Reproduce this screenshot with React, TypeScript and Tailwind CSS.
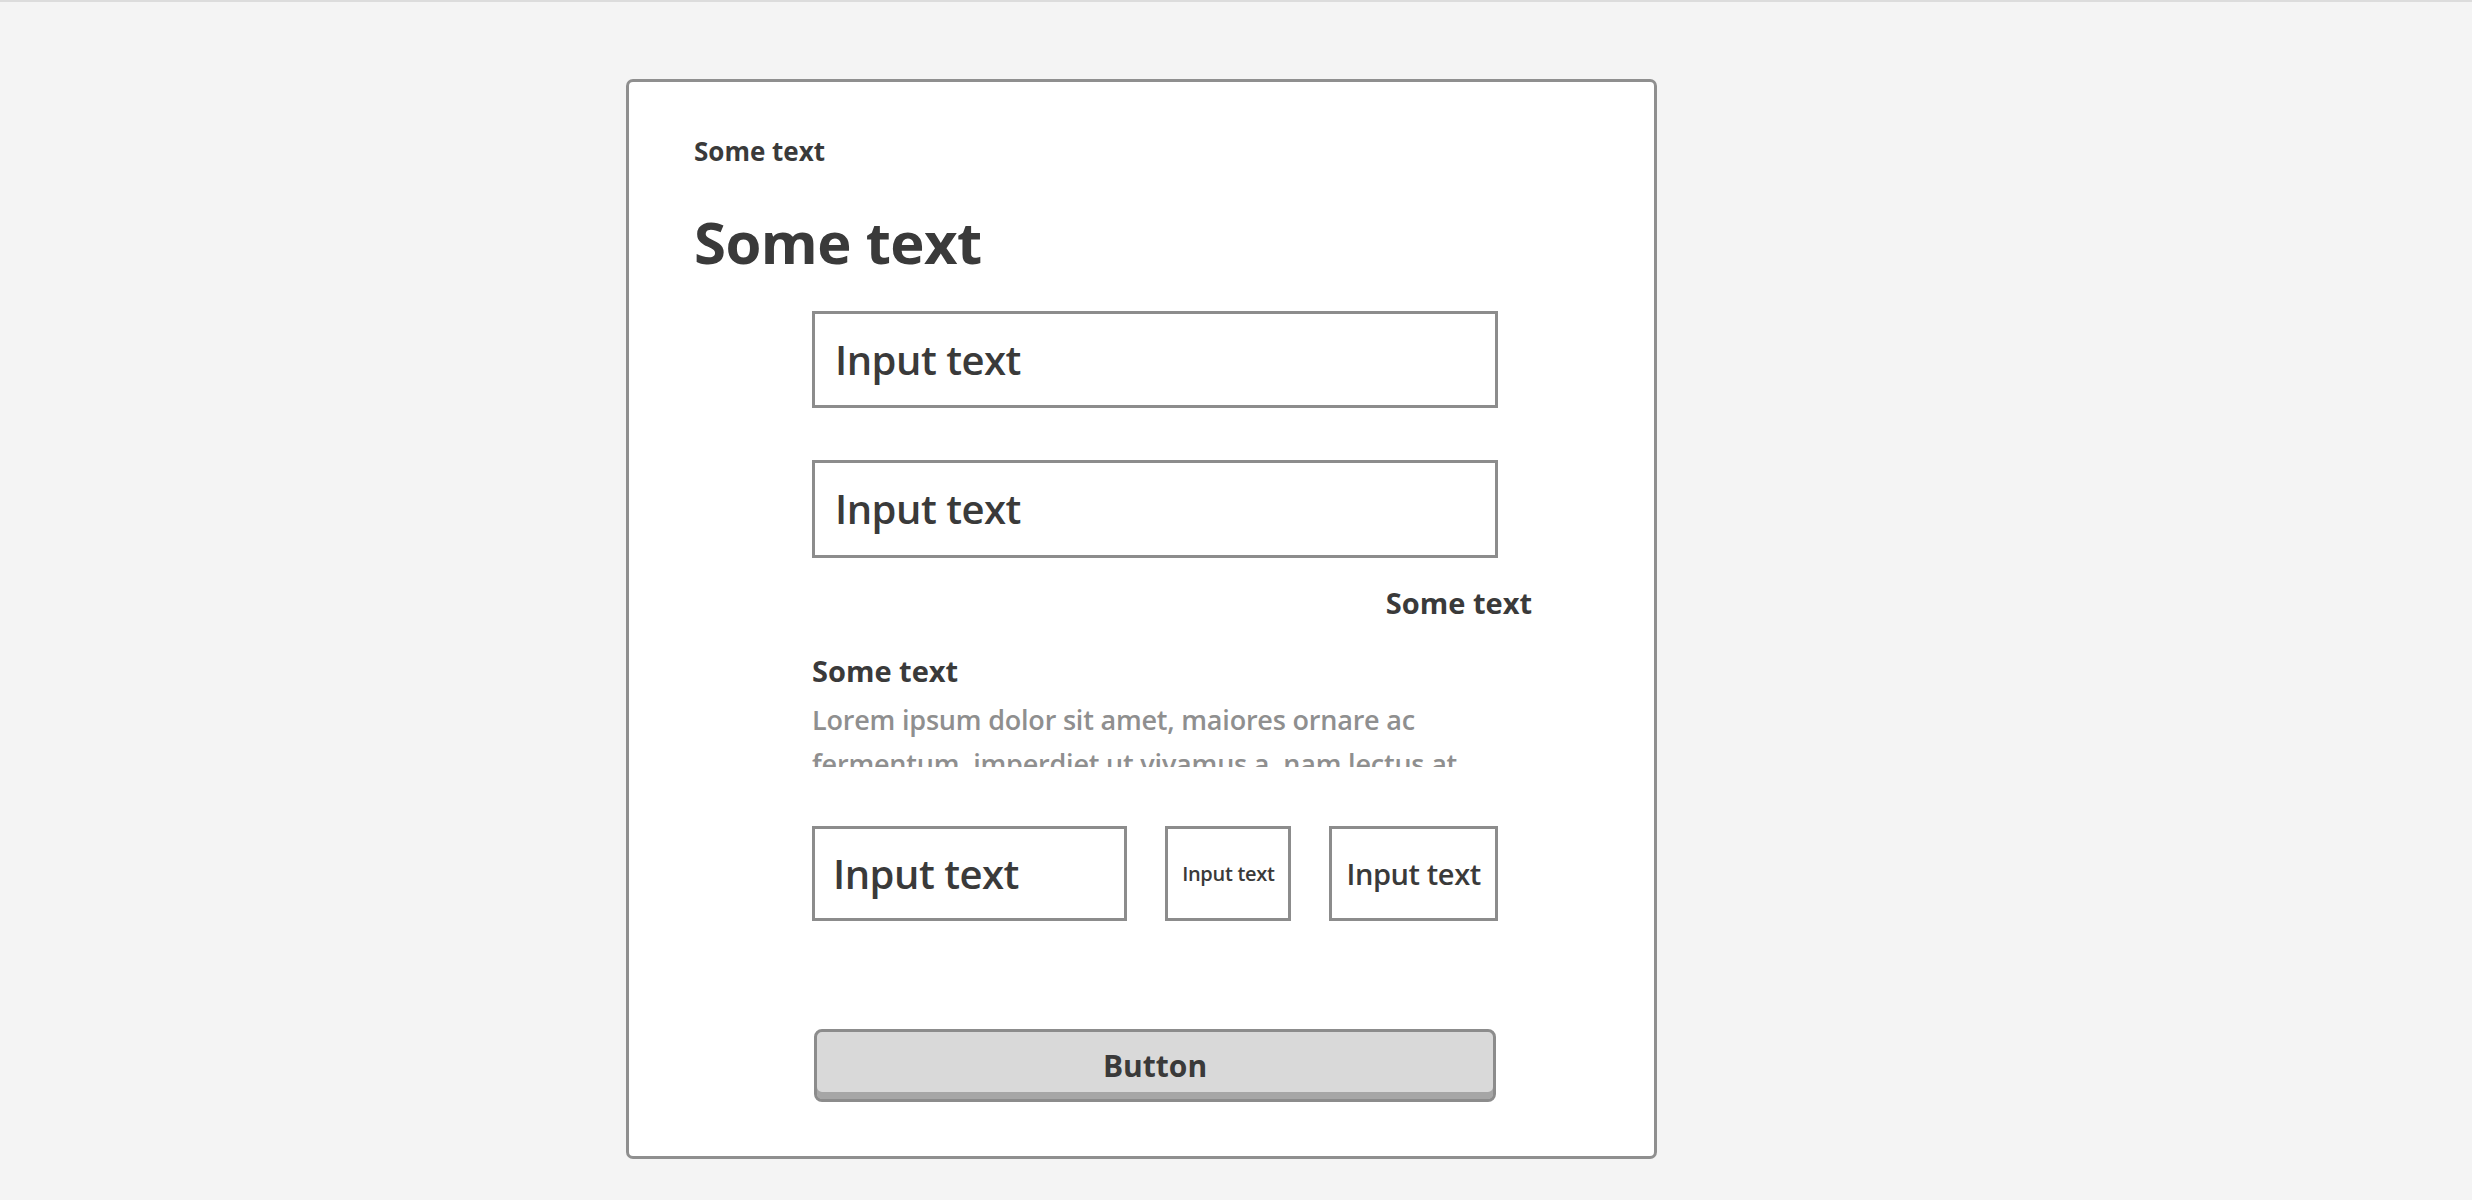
const font = "font-['Open_Sans',sans-serif]"

function Field({ label, className, textClass }: { label: string; className: string; textClass: string }) {
  return (
    <div className={`flex items-center border-[3px] border-[#8c8c8c] bg-white ${className}`}>
      <span className={`whitespace-nowrap text-[#3a3a3a] ${textClass}`}>{label}</span>
    </div>
  )
}

export default function App() {
  return (
    <div className={`min-h-[1200px] w-full border-t-2 border-[#dcdcdc] bg-[#f4f4f4] ${font}`}>
      <div className="ml-[626px] mt-[77px] w-[1031px] rounded-[7px] border-[3px] border-[#8f8f8f] bg-white pb-[54px] pl-[65px] pt-[51px] text-[#3a3a3a]">
        <div className="text-[26px] font-bold leading-[36px]">Some text</div>
        <h1 className="mt-[38px] text-[58px] font-bold leading-[70px] tracking-[-0.5px]">Some text</h1>

        <div className="ml-[118px] w-[686px]">
          <Field label="Input text" className="mt-[34px] h-[97px] pl-[20px]" textClass="text-[40px] font-semibold tracking-[-0.5px]" />
          <Field label="Input text" className="mt-[52px] h-[98px] pl-[20px]" textClass="text-[40px] font-semibold tracking-[-0.5px]" />

          <div className="mt-[27px] w-[720px] text-right text-[29px] font-bold leading-[36px]">Some text</div>

          <div className="mt-[32px] text-[29px] font-bold leading-[36px]">Some text</div>
          <div className="mt-[9px] h-[69px] overflow-hidden text-[27px] font-semibold leading-[44px] tracking-[-0.2px] text-[#8f8f8f]">
            Lorem ipsum dolor sit amet, maiores ornare ac fermentum, imperdiet ut vivamus a, nam lectus at
          </div>

          <div className="mt-[59px] flex gap-[38px]">
            <Field label="Input text" className="h-[95px] w-[316px] pl-[18px]" textClass="text-[40px] font-semibold tracking-[-0.5px]" />
            <Field label="Input text" className="h-[95px] w-[126px] justify-center" textClass="text-[20px] font-semibold tracking-[-0.3px]" />
            <Field label="Input text" className="h-[95px] w-[169px] justify-center" textClass="text-[29px] font-semibold tracking-[-0.4px]" />
          </div>

          <button className="ml-[2px] mt-[108px] flex h-[73px] w-[682px] items-center justify-center rounded-[8px] border-[3px] border-[#8c8c8c] bg-[#d9d9d9] text-[30px] font-bold text-[#3a3a3a] shadow-[inset_0_-7px_0_#a6a6a6]">
            Button
          </button>
        </div>
      </div>
    </div>
  )
}
